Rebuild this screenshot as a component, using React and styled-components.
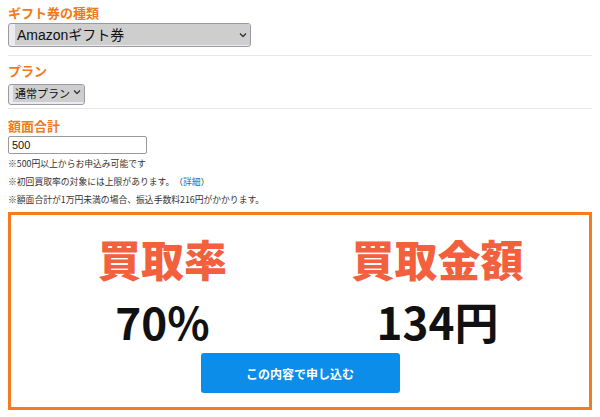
import React from 'react';
import styled, { createGlobalStyle } from 'styled-components';

const GlobalStyle = createGlobalStyle`
  body {
    margin: 0;
    background: #fff;
    font-family: "Noto Sans CJK JP", "Noto Sans", sans-serif;
    color: #222;
  }
`;

const Page = styled.div`
  padding: 0 8px;
  width: 584px;
  box-sizing: content-box;
`;

const Heading = styled.h3`
  margin: ${p => p.top || 0}px 0 0;
  font-size: 13px;
  line-height: 21px;
  font-weight: 700;
  color: #ef7a22;
`;

const SelectWrap = styled.div`
  position: relative;
  width: ${p => p.width}px;
  height: ${p => p.height}px;
`;

const Select = styled.select`
  appearance: none;
  width: 100%;
  height: 100%;
  margin: 0;
  padding: 0 0 0 ${p => p.pad}px;
  box-sizing: border-box;
  background: #ececf0;
  border: 1px solid #9a9aa4;
  border-radius: 3px;
  font-family: "Liberation Sans", "Noto Sans CJK JP", sans-serif;
  font-size: ${p => p.size}px;
  color: #111;
`;

const Chevron = styled.svg`
  position: absolute;
  right: ${p => p.right}px;
  top: 50%;
  transform: translateY(-50%);
  pointer-events: none;
`;

const Divider = styled.hr`
  border: 0;
  height: 1px;
  background: #e6e6e6;
  margin: ${p => p.top}px 0 0;
`;

const AmountInput = styled.input`
  display: block;
  width: 139px;
  height: 18px;
  margin: 0;
  padding: 0 3px;
  box-sizing: border-box;
  border: 1px solid #9a9a9a;
  border-radius: 2px;
  font-family: "Liberation Sans", sans-serif;
  font-size: 11px;
  color: #111;
`;

const Notes = styled.div`
  padding-top: 1px;
  font-size: 8.8px;
  line-height: 18px;
  color: #333;
  text-spacing-trim: space-all;
`;

const Link = styled.a`
  color: #1a6fc4;
  text-decoration: none;
`;

const ResultBox = styled.div`
  margin-top: 3px;
  height: 198px;
  box-sizing: border-box;
  border: 3px solid #f47b20;
  padding: 17px 14px 0;
  display: flex;
  flex-direction: column;
  align-items: center;
`;

const Columns = styled.div`
  width: 100%;
  display: grid;
  grid-template-columns: 1fr 1fr;
`;

const Column = styled.div`
  display: flex;
  flex-direction: column;
  align-items: center;
`;

const Title = styled.div`
  font-size: 43px;
  line-height: 52px;
  font-weight: 900;
  color: #f2603e;
`;

const Value = styled.div`
  margin-top: 11px;
  font-size: 44px;
  line-height: 52px;
  font-weight: 700;
  color: #111;
`;

const SubmitButton = styled.button`
  margin-top: 6px;
  width: 199px;
  height: 40px;
  border: 0;
  border-radius: 3px;
  background: #0b8de9;
  color: #fff;
  font-family: "Noto Sans CJK JP", sans-serif;
  font-size: 12px;
  font-weight: 700;
`;

const ChevronIcon = ({ right }) => (
  <Chevron right={right} width="8" height="5" viewBox="0 0 8 5">
    <path d="M1 1l3 3 3-3" fill="none" stroke="#333" strokeWidth="1.3" />
  </Chevron>
);

export default function App() {
  return (
    <Page>
      <GlobalStyle />
      <Heading top={2}>ギフト券の種類</Heading>
      <SelectWrap width={243} height={24}>
        <Select pad={6} size={14} defaultValue="amazon">
          <option value="amazon">Amazonギフト券</option>
        </Select>
        <ChevronIcon right={4} />
      </SelectWrap>
      <Divider top={8} />

      <Heading top={4}>プラン</Heading>
      <SelectWrap width={77} height={21}>
        <Select pad={4} size={11} defaultValue="normal">
          <option value="normal">通常プラン</option>
        </Select>
        <ChevronIcon right={4} />
      </SelectWrap>
      <Divider top={6} />

      <Heading top={6}>額面合計</Heading>
      <AmountInput defaultValue="500" />
      <Notes>
        <div>※500円以上からお申込み可能です</div>
        <div>※初回買取率の対象には上限があります。（<Link href="#">詳細</Link>）</div>
        <div>※額面合計が1万円未満の場合、振込手数料216円がかかります。</div>
      </Notes>

      <ResultBox>
        <Columns>
          <Column>
            <Title>買取率</Title>
            <Value>70%</Value>
          </Column>
          <Column>
            <Title>買取金額</Title>
            <Value>134円</Value>
          </Column>
        </Columns>
        <SubmitButton>この内容で申し込む</SubmitButton>
      </ResultBox>
    </Page>
  );
}
